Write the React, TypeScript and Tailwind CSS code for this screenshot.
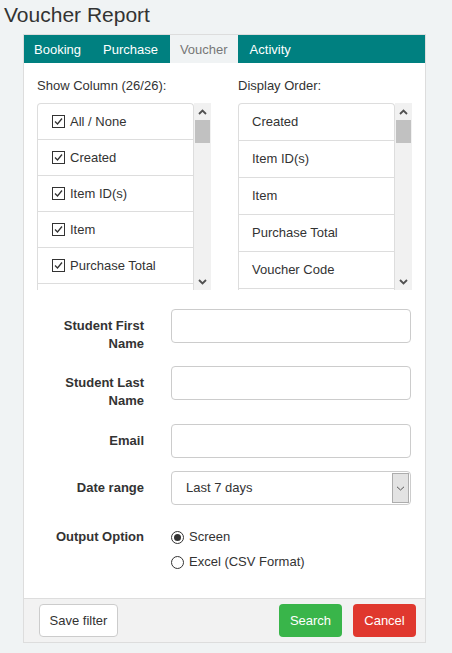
import React from "react";

const columns = ["All / None", "Created", "Item ID(s)", "Item", "Purchase Total"];
const order = ["Created", "Item ID(s)", "Item", "Purchase Total", "Voucher Code"];

function Scrollbar() {
  return (
    <div className="flex w-[17px] flex-col bg-[#f1f1f1]">
      <div className="flex h-[17px] items-center justify-center">
        <svg width="9" height="6" viewBox="0 0 9 6">
          <path d="M1 5 L4.5 1.5 L8 5" fill="none" stroke="#505050" strokeWidth="1.8" />
        </svg>
      </div>
      <div className="mx-[1px] h-[23px] bg-[#c1c1c1]" />
      <div className="flex-1" />
      <div className="flex h-[17px] items-center justify-center">
        <svg width="9" height="6" viewBox="0 0 9 6">
          <path d="M1 1 L4.5 4.5 L8 1" fill="none" stroke="#505050" strokeWidth="1.8" />
        </svg>
      </div>
    </div>
  );
}

function Checkbox() {
  return (
    <span className="flex h-[13px] w-[13px] items-center justify-center border border-[#333] bg-white">
      <svg width="11" height="11" viewBox="0 0 11 11">
        <path d="M2 5.5 L4.5 8 L9 2.5" fill="none" stroke="#333" strokeWidth="1.3" />
      </svg>
    </span>
  );
}

function Radio({ checked }: { checked?: boolean }) {
  return (
    <span className="flex h-[13px] w-[13px] items-center justify-center rounded-full border border-[#333] bg-white">
      {checked && <span className="h-[7px] w-[7px] rounded-full bg-[#333]" />}
    </span>
  );
}

function FieldRow({ label, className, children }: { label: React.ReactNode; className: string; children: React.ReactNode }) {
  return (
    <div className={`flex items-start ${className}`}>
      <div className="w-[120px] pt-[8px] text-right font-bold leading-[18px]">{label}</div>
      <div className="ml-[27px] w-[240px]">{children}</div>
    </div>
  );
}

function TextBox() {
  return <div className="h-[34px] rounded-[4px] border border-[#ccc] bg-white" />;
}

export default function App() {
  return (
    <div className="min-h-screen bg-[#f0f3f4] text-[13px] text-[#333]" style={{ fontFamily: '"Liberation Sans", Arial, sans-serif' }}>
      <div className="pl-[4px] pt-[3px] text-[21px] leading-[24px] text-[#333]">Voucher Report</div>

      <div className="ml-[23px] mt-[7px] w-[403px] border border-[#ddd] bg-white">
        <div className="flex h-[28px] bg-[#008080] pt-[1px] text-white">
          <div className="mr-[2px] flex items-center px-[10px]">Booking</div>
          <div className="mr-[2px] flex items-center px-[10px]">Purchase</div>
          <div className="-mt-[1px] mr-[2px] flex items-center bg-[#f0f3f4] px-[10px] pt-[1px] text-[#777]">Voucher</div>
          <div className="flex items-center px-[10px]">Activity</div>
        </div>

        <div className="pb-[27px] pt-[14px]">
          <div className="flex gap-[27px] px-[13px]">
            <div className="w-[174px]">
              <div className="mb-[8px] leading-[18px]">Show Column (26/26):</div>
              <div className="flex h-[187px]">
                <div className="flex-1 overflow-hidden rounded-t-[4px] border-x border-t border-[#ddd]">
                  {columns.map((c) => (
                    <div key={c} className="flex h-[36px] items-center gap-[5px] border-b border-[#ddd] pl-[14px]">
                      <Checkbox />
                      <span>{c}</span>
                    </div>
                  ))}
                </div>
                <Scrollbar />
              </div>
            </div>
            <div className="w-[174px]">
              <div className="mb-[8px] leading-[18px]">Display Order:</div>
              <div className="flex h-[187px]">
                <div className="flex-1 overflow-hidden rounded-t-[4px] border-x border-t border-[#ddd]">
                  {order.map((c) => (
                    <div key={c} className="flex h-[37px] items-center border-b border-[#ddd] pl-[13px]">
                      {c}
                    </div>
                  ))}
                </div>
                <Scrollbar />
              </div>
            </div>
          </div>

          <FieldRow label={<>Student First<br />Name</>} className="mt-[19px] mb-[13px]">
            <TextBox />
          </FieldRow>
          <FieldRow label={<>Student Last<br />Name</>} className="mb-[14px]">
            <TextBox />
          </FieldRow>
          <FieldRow label="Email" className="mb-[13px]">
            <TextBox />
          </FieldRow>
          <FieldRow label="Date range" className="mb-[15px]">
            <div className="flex h-[34px] rounded-[4px] border border-[#ccc] bg-white">
              <div className="flex flex-1 items-center pl-[14px]">Last 7 days</div>
              <div className="my-[1px] mr-[1px] flex w-[17px] items-center justify-center border border-[#adadad] bg-[#e3e3e3]">
                <svg width="9" height="5" viewBox="0 0 9 5">
                  <path d="M1 0.8 L4.5 4 L8 0.8" fill="none" stroke="#555" strokeWidth="1" />
                </svg>
              </div>
            </div>
          </FieldRow>
          <FieldRow label="Output Option" className="">
            <div className="pt-[8px]">
              <div className="flex h-[18px] items-center gap-[5px]">
                <Radio checked />
                <span>Screen</span>
              </div>
              <div className="mt-[7px] flex h-[18px] items-center gap-[5px]">
                <Radio />
                <span>Excel (CSV Format)</span>
              </div>
            </div>
          </FieldRow>
        </div>

        <div className="flex items-center border-t border-[#ddd] bg-[#f2f2f2] py-[5px] pl-[15px] pr-[9px]">
          <button className="h-[33px] w-[79px] rounded-[4px] border border-[#ccc] bg-white text-[#333]">Save filter</button>
          <div className="flex-1" />
          <button className="h-[33px] w-[63px] rounded-[4px] bg-[#39b54a] text-white">Search</button>
          <button className="ml-[11px] h-[33px] w-[63px] rounded-[4px] bg-[#e0382e] text-white">Cancel</button>
        </div>
      </div>
    </div>
  );
}
